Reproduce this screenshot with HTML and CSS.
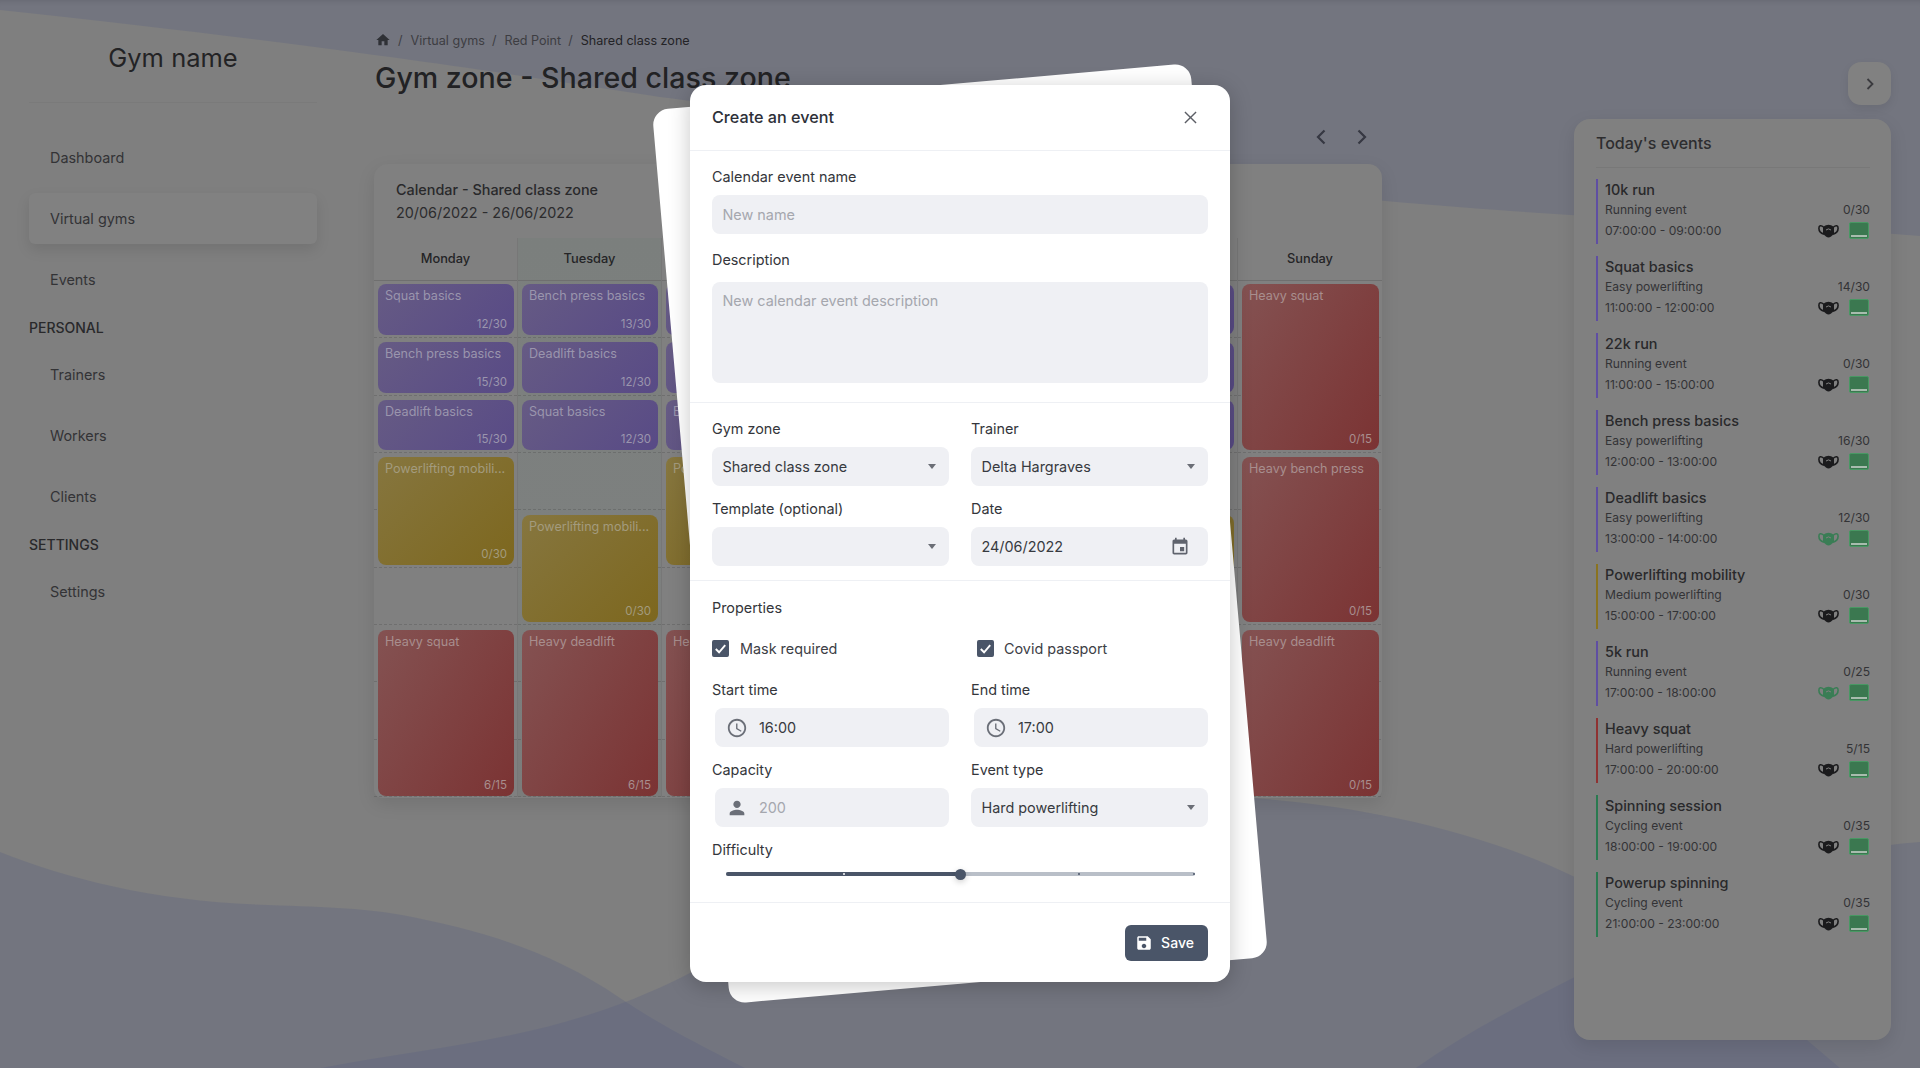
FILE: index.html
```html
<!DOCTYPE html>
<html lang="en">
<head>
<meta charset="utf-8">
<title>Gym zone - Shared class zone</title>
<link rel="stylesheet" href="styles.css">
</head>
<body>
<svg class="defs" aria-hidden="true">
  <symbol id="mask" viewBox="0 0 21 14">
    <path d="M5 3C7 1.5 9 .8 10.5 .8S14 1.5 16 3V9.5C14 12 12 13.6 10.5 13.6S7 12 5 9.500Z" fill="currentColor"/>
    <path d="M5.500 3C3 .8 .9 1.500 .9 4.200C.9 7 3 9.200 6 10.200M15.500 3C18 .8 20.100 1.500 20.100 4.200C20.100 7 18 9.200 15 10.200" fill="none" stroke="currentColor" stroke-width="1.600"/>
    <path d="M8 6Q10.500 3.800 13 6" fill="none" stroke="#808080" stroke-width="1"/>
  </symbol>
</svg>
<svg class="bg" viewBox="0 0 1920 1068" preserveAspectRatio="none" aria-hidden="true">
  <path class="wave" d="M0 0H1920V236C1800 226 1680 222 1570 215C1400 204 1250 192 1000 150C850 125 750 108 660 97C500 72 300 42 0 10Z"/>
  <path class="wave" d="M0 852C70 880 160 902 268 905C330 907 370 909 402 915C480 930 550 950 620 998C660 1025 700 1045 745 1068H0Z"/>
  <path class="wave" d="M321 1068C450 1043 560 1040 690 973C800 900 1000 780 1253 798C1360 806 1480 830 1577 878C1680 930 1760 1000 1840 1068Z"/>
  <path class="wave" d="M1416 1068C1470 1030 1530 1000 1575 977C1680 910 1800 850 1920 842V1068Z"/>
</svg>

<div class="app">
  <aside class="sidebar">
    <div class="brand">Gym name</div>
    <nav class="nav">
      <a class="nav-item">Dashboard</a>
      <a class="nav-item is-active">Virtual gyms</a>
      <a class="nav-item">Events</a>
      <div class="nav-heading">PERSONAL</div>
      <a class="nav-item">Trainers</a>
      <a class="nav-item">Workers</a>
      <a class="nav-item">Clients</a>
      <div class="nav-heading">SETTINGS</div>
      <a class="nav-item">Settings</a>
    </nav>
  </aside>

  <main class="main">
    <div class="crumbs">
      <svg class="crumb-home" viewBox="0 0 24 24"><path d="M10 20v-6h4v6h5v-8h3L12 3 2 12h3v8z"/></svg>
      <span class="crumb-sep">/</span><span>Virtual gyms</span>
      <span class="crumb-sep">/</span><span>Red Point</span>
      <span class="crumb-sep">/</span><span class="crumb-current">Shared class zone</span>
    </div>
    <h1 class="title">Gym zone - Shared class zone</h1>
    <div class="week-nav">
      <svg class="chev" viewBox="0 0 10 16"><path d="M8.500 1.500 2 8l6.500 6.500"/></svg>
      <svg class="chev" viewBox="0 0 10 16"><path d="M1.500 1.500 8 8l-6.500 6.500"/></svg>
    </div>
    <section class="calendar">
      <header class="cal-head">
        <div class="cal-name">Calendar - Shared class zone</div>
        <div class="cal-range">20/06/2022 - 26/06/2022</div>
      </header>
      <div class="days">
        <div class="day">
          <div class="day-name">Monday</div>
          <div class="slots">
            <div class="ev ev-purple r1"><span class="ev-t">Squat basics</span><span class="ev-c">12/30</span></div>
            <div class="ev ev-purple r2"><span class="ev-t">Bench press basics</span><span class="ev-c">15/30</span></div>
            <div class="ev ev-purple r3"><span class="ev-t">Deadlift basics</span><span class="ev-c">15/30</span></div>
            <div class="ev ev-yellow r4-5"><span class="ev-t">Powerlifting mobili...</span><span class="ev-c">0/30</span></div>
            <div class="ev ev-red r7-9"><span class="ev-t">Heavy squat</span><span class="ev-c">6/15</span></div>
          </div>
        </div>
        <div class="day day-tint">
          <div class="day-name">Tuesday</div>
          <div class="slots">
            <div class="ev ev-purple r1"><span class="ev-t">Bench press basics</span><span class="ev-c">13/30</span></div>
            <div class="ev ev-purple r2"><span class="ev-t">Deadlift basics</span><span class="ev-c">12/30</span></div>
            <div class="ev ev-purple r3"><span class="ev-t">Squat basics</span><span class="ev-c">12/30</span></div>
            <div class="ev ev-yellow r5-6"><span class="ev-t">Powerlifting mobili...</span><span class="ev-c">0/30</span></div>
            <div class="ev ev-red r7-9"><span class="ev-t">Heavy deadlift</span><span class="ev-c">6/15</span></div>
          </div>
        </div>
        <div class="day">
          <div class="day-name">Wednesday</div>
          <div class="slots">
            <div class="ev ev-purple r1"><span class="ev-t">Squat basics</span><span class="ev-c">12/30</span></div>
            <div class="ev ev-purple r2"><span class="ev-t">Deadlift basics</span><span class="ev-c">12/30</span></div>
            <div class="ev ev-purple r3"><span class="ev-t">Bench press basics</span><span class="ev-c">15/30</span></div>
            <div class="ev ev-yellow r4-5"><span class="ev-t">Powerlifting mobili...</span><span class="ev-c">0/30</span></div>
            <div class="ev ev-red r7-9"><span class="ev-t">Heavy squat</span><span class="ev-c">6/15</span></div>
          </div>
        </div>
        <div class="day">
          <div class="day-name">Thursday</div>
          <div class="slots"></div>
        </div>
        <div class="day">
          <div class="day-name">Friday</div>
          <div class="slots"></div>
        </div>
        <div class="day">
          <div class="day-name">Saturday</div>
          <div class="slots">
            <div class="ev ev-purple r1"><span class="ev-t">Squat basics</span><span class="ev-c">12/30</span></div>
            <div class="ev ev-purple r2"><span class="ev-t">Deadlift basics</span><span class="ev-c">12/30</span></div>
            <div class="ev ev-purple r3"><span class="ev-t">Bench press basics</span><span class="ev-c">15/30</span></div>
            <div class="ev ev-yellow r5-6"><span class="ev-t">Powerlifting mobili...</span><span class="ev-c">0/30</span></div>
            <div class="ev ev-red r7-9"><span class="ev-t">Heavy squat</span><span class="ev-c">6/15</span></div>
          </div>
        </div>
        <div class="day">
          <div class="day-name">Sunday</div>
          <div class="slots">
            <div class="ev ev-red r1-3"><span class="ev-t">Heavy squat</span><span class="ev-c">0/15</span></div>
            <div class="ev ev-red r4-6"><span class="ev-t">Heavy bench press</span><span class="ev-c">0/15</span></div>
            <div class="ev ev-red r7-9"><span class="ev-t">Heavy deadlift</span><span class="ev-c">0/15</span></div>
          </div>
        </div>
      </div>
    </section>
  </main>

  <aside class="rail">
    <button class="collapse" type="button">
      <svg class="chev-sm" viewBox="0 0 8 12"><path d="M1.500 1 6.500 6l-5 5"/></svg>
    </button>
    <section class="today">
      <h2 class="today-title">Today's events</h2>
      <div class="today-list">
        <article class="te te-purple"><div class="te-name">10k run</div><div class="te-row"><span>Running event</span><span>0/30</span></div><div class="te-row te-last"><span>07:00:00 - 09:00:00</span><span class="te-icons"><svg class="mask-i"><use href="#mask"/></svg><i class="pass"></i></span></div></article>
        <article class="te te-purple"><div class="te-name">Squat basics</div><div class="te-row"><span>Easy powerlifting</span><span>14/30</span></div><div class="te-row te-last"><span>11:00:00 - 12:00:00</span><span class="te-icons"><svg class="mask-i"><use href="#mask"/></svg><i class="pass"></i></span></div></article>
        <article class="te te-purple"><div class="te-name">22k run</div><div class="te-row"><span>Running event</span><span>0/30</span></div><div class="te-row te-last"><span>11:00:00 - 15:00:00</span><span class="te-icons"><svg class="mask-i"><use href="#mask"/></svg><i class="pass"></i></span></div></article>
        <article class="te te-purple"><div class="te-name">Bench press basics</div><div class="te-row"><span>Easy powerlifting</span><span>16/30</span></div><div class="te-row te-last"><span>12:00:00 - 13:00:00</span><span class="te-icons"><svg class="mask-i"><use href="#mask"/></svg><i class="pass"></i></span></div></article>
        <article class="te te-purple"><div class="te-name">Deadlift basics</div><div class="te-row"><span>Easy powerlifting</span><span>12/30</span></div><div class="te-row te-last"><span>13:00:00 - 14:00:00</span><span class="te-icons"><svg class="mask-i mask-ok"><use href="#mask"/></svg><i class="pass"></i></span></div></article>
        <article class="te te-yellow"><div class="te-name">Powerlifting mobility</div><div class="te-row"><span>Medium powerlifting</span><span>0/30</span></div><div class="te-row te-last"><span>15:00:00 - 17:00:00</span><span class="te-icons"><svg class="mask-i"><use href="#mask"/></svg><i class="pass"></i></span></div></article>
        <article class="te te-purple"><div class="te-name">5k run</div><div class="te-row"><span>Running event</span><span>0/25</span></div><div class="te-row te-last"><span>17:00:00 - 18:00:00</span><span class="te-icons"><svg class="mask-i mask-ok"><use href="#mask"/></svg><i class="pass"></i></span></div></article>
        <article class="te te-red"><div class="te-name">Heavy squat</div><div class="te-row"><span>Hard powerlifting</span><span>5/15</span></div><div class="te-row te-last"><span>17:00:00 - 20:00:00</span><span class="te-icons"><svg class="mask-i"><use href="#mask"/></svg><i class="pass"></i></span></div></article>
        <article class="te te-green"><div class="te-name">Spinning session</div><div class="te-row"><span>Cycling event</span><span>0/35</span></div><div class="te-row te-last"><span>18:00:00 - 19:00:00</span><span class="te-icons"><svg class="mask-i"><use href="#mask"/></svg><i class="pass"></i></span></div></article>
        <article class="te te-green"><div class="te-name">Powerup spinning</div><div class="te-row"><span>Cycling event</span><span>0/35</span></div><div class="te-row te-last"><span>21:00:00 - 23:00:00</span><span class="te-icons"><svg class="mask-i"><use href="#mask"/></svg><i class="pass"></i></span></div></article>
      </div>
    </section>
  </aside>
</div>

<div class="modal-wrap">
  <div class="modal-back"></div>
  <form class="modal">
    <header class="modal-head">
      <span>Create an event</span>
      <svg class="close" viewBox="0 0 14 14"><path d="M1 1l12 12M13 1 1 13"/></svg>
    </header>
    <section class="sec sec-a">
      <label class="lbl">Calendar event name</label>
      <div class="field ph">New name</div>
      <label class="lbl lbl-desc">Description</label>
      <div class="field area ph">New calendar event description</div>
    </section>
    <section class="sec sec-b">
      <div class="two">
        <div><label class="lbl">Gym zone</label><div class="field sel">Shared class zone</div></div>
        <div><label class="lbl">Trainer</label><div class="field sel">Delta Hargraves</div></div>
        <div><label class="lbl">Template (optional)</label><div class="field sel"></div></div>
        <div><label class="lbl">Date</label><div class="field date"><span>24/06/2022</span><svg class="ic-date" viewBox="0 0 24 24"><path d="M17 12h-5v5h5v-5zM16 1v2H8V1H6v2H5c-1.110 0-1.990.9-1.990 2L3 19c0 1.100.89 2 2 2h14c1.100 0 2-.9 2-2V5c0-1.100-.9-2-2-2h-1V1h-2zm3 18H5V8h14v11z"/></svg></div></div>
      </div>
    </section>
    <section class="sec sec-c">
      <div class="lbl">Properties</div>
      <div class="checks">
        <label class="chk"><svg class="box" viewBox="0 0 18 18"><rect width="18" height="18" rx="2"/><path d="M4 9.500 7.500 13 14 5.500"/></svg>Mask required</label>
        <label class="chk chk-second"><svg class="box" viewBox="0 0 18 18"><rect width="18" height="18" rx="2"/><path d="M4 9.500 7.500 13 14 5.500"/></svg>Covid passport</label>
      </div>
      <div class="two two-c">
        <div><label class="lbl">Start time</label><div class="field adorn"><svg class="ic" viewBox="0 0 24 24"><path d="M11.990 2C6.470 2 2 6.480 2 12s4.470 10 9.990 10C17.520 22 22 17.520 22 12S17.520 2 11.990 2zM12 20c-4.420 0-8-3.580-8-8s3.580-8 8-8 8 3.580 8 8-3.580 8-8 8zm.5-13H11v6l5.250 3.150.75-1.230-4.500-2.670z"/></svg>16:00</div></div>
        <div><label class="lbl">End time</label><div class="field adorn"><svg class="ic" viewBox="0 0 24 24"><path d="M11.990 2C6.470 2 2 6.480 2 12s4.470 10 9.990 10C17.520 22 22 17.520 22 12S17.520 2 11.990 2zM12 20c-4.420 0-8-3.580-8-8s3.580-8 8-8 8 3.580 8 8-3.580 8-8 8zm.5-13H11v6l5.250 3.150.75-1.230-4.500-2.670z"/></svg>17:00</div></div>
        <div><label class="lbl">Capacity</label><div class="field adorn ph"><svg class="ic" viewBox="0 0 24 24"><path d="M12 12c2.210 0 4-1.790 4-4s-1.790-4-4-4-4 1.790-4 4 1.790 4 4 4zm0 2c-2.670 0-8 1.340-8 4v2h16v-2c0-2.660-5.330-4-8-4z"/></svg>200</div></div>
        <div><label class="lbl">Event type</label><div class="field sel">Hard powerlifting</div></div>
      </div>
      <label class="lbl lbl-diff">Difficulty</label>
      <div class="slider">
        <div class="slider-fill"></div>
        <i class="tick tick-1"></i><i class="tick tick-2"></i><i class="tick tick-3"></i>
        <div class="thumb"></div>
      </div>
    </section>
    <footer class="modal-foot">
      <button class="save" type="button"><svg viewBox="0 0 24 24"><path d="M17 3H5c-1.110 0-2 .9-2 2v14c0 1.100.89 2 2 2h14c1.100 0 2-.9 2-2V7l-4-4zm-5 16c-1.660 0-3-1.340-3-3s1.340-3 3-3 3 1.340 3 3-1.340 3-3 3zm3-10H5V5h10v4z"/></svg>Save</button>
    </footer>
  </form>
</div>
</body>
</html>
```
FILE: styles.css
```css
* { box-sizing: border-box; }
html, body { margin: 0; height: 1068px; overflow: hidden; }
body {
  position: relative;
  background: #7f7f7f;
  font-family: Inter, "Liberation Sans", sans-serif;
  font-size: 14.400px;
  color: #2a2a2c;
}
.defs { position: absolute; width: 0; height: 0; }
.bg { position: absolute; left: 0; top: 0; width: 1920px; height: 1068px; }
.wave { fill: rgba(90, 95, 130, .3); }

.app { position: relative; z-index: 0; display: flex; height: 1068px; box-shadow: inset 0 6px 6px -6px rgba(0, 0, 0, .15); }

/* Sidebar */
.sidebar { width: 374px; padding-left: 29px; flex: none; }
.brand {
  width: 288px; height: 103px; padding-top: 41px;
  border-bottom: 1px solid #7a7a7a;
  font-size: 25.500px; line-height: 34px; font-weight: 400; text-align: center; color: #232325;
}
.nav { width: 288px; margin-top: 29px; display: flex; flex-direction: column; }
.nav-item { display: flex; align-items: center; height: 51px; margin-bottom: 10px; padding-left: 21px; color: #333336; }
.nav-item.is-active { background: #818181; border-radius: 6px; box-shadow: 0 6px 14px rgba(0, 0, 0, .1); }
.nav-heading { height: 20px; margin: 3px 0 11px; line-height: 20px; font-size: 14px; font-weight: 500; color: #29292b; }

/* Main */
.main { width: 1008px; flex: none; padding-top: 32px; }
.crumbs { display: flex; align-items: center; height: 16px; font-size: 12.600px; color: #3d3d42; }
.crumb-home { width: 16px; height: 16px; fill: #2f3136; margin: 0 7px 0 1px; }
.crumb-sep { margin: 0 8px 0 0; }
.crumbs span + .crumb-sep { margin-left: 7px; }
.crumb-current { color: #232326; }
.title { margin: 12px 0 0 1px; font-size: 28.600px; line-height: 36px; font-weight: 500; color: #222224; }
.week-nav { display: flex; justify-content: flex-end; gap: 31px; height: 26px; margin: 28px 0 14px; padding-right: 15px; align-items: center; }
.chev { width: 10px; height: 16px; fill: none; stroke: #363842; stroke-width: 2.200; }

.calendar { height: 634px; background: #808080; border-radius: 14px 14px 8px 8px; box-shadow: 0 6px 18px rgba(0, 0, 0, .1); }
.cal-head { height: 74px; padding: 14px 22px 0; line-height: 23px; }
.cal-name { font-weight: 500; color: #29292b; }
.cal-range { color: #2c2c2e; }
.days { display: grid; grid-template-columns: repeat(7, 144px); }
.day { border-right: 1px solid #777; }
.day:last-child { border-right: 0; }
.day-tint { background: linear-gradient(180deg, #7b7f7d, #7d807f 55%, #7b7c7b); }
.day-name { height: 43px; line-height: 42px; text-align: center; font-size: 12.800px; font-weight: 500; color: #242426; border-bottom: 1px solid #6f6f6f; }
.slots {
  display: grid;
  grid-template-rows: repeat(9, 57.330px);
  height: 516px;
  position: relative;
}
.slots::before {
  content: ""; position: absolute; inset: 0;
  background: repeating-linear-gradient(180deg, transparent 0 56.330px, rgba(0, 0, 0, .13) 56.330px 57.330px);
  -webkit-mask-image: repeating-linear-gradient(90deg, #000 0 3px, transparent 3px 5px);
  mask-image: repeating-linear-gradient(90deg, #000 0 3px, transparent 3px 5px);
}
.ev {
  position: relative; z-index: 1;
  grid-column: 1;
  margin: 4px 3px 3px 4px; padding: 3px 7px 2px;
  border-radius: 8px;
  display: flex; flex-direction: column; justify-content: space-between;
  font-size: 12.600px; line-height: 18px;
  min-width: 0;
  color: #96919f;
}
.ev-t { white-space: nowrap; overflow: hidden; font-weight: 400; }
.ev-c { text-align: right; font-size: 11.500px; }
.ev-purple { background: linear-gradient(135deg, #665b84, #584a86); color: #9a95ad; }
.ev-yellow { background: linear-gradient(135deg, #86763f, #7d671e); color: #a39b7e; }
.ev-red { background: linear-gradient(120deg, #845252, #7b3333); color: #a88e8e; }
.r1 { grid-row: 1; margin-top: 3px; } .r2 { grid-row: 2; } .r3 { grid-row: 3; }
.r4-5 { grid-row: 4 / span 2; } .r5-6 { grid-row: 5 / span 2; margin-top: 5px; }
.r7-9 { grid-row: 7 / span 3; margin-top: 5px; margin-bottom: 1px; } .r1-3 { grid-row: 1 / span 3; margin-top: 3px; } .r4-6 { grid-row: 4 / span 3; }

/* Right rail */
.rail { width: 317px; margin-left: 192px; flex: none; padding-top: 62px; display: flex; flex-direction: column; align-items: flex-end; }
.collapse {
  width: 43px; height: 43px; margin-bottom: 14px; padding: 0;
  border: 0; border-radius: 13px; background: #818181;
  box-shadow: 0 4px 10px rgba(0, 0, 0, .08);
  display: flex; align-items: center; justify-content: center;
}
.chev-sm { width: 8px; height: 12px; fill: none; stroke: #3a3a3e; stroke-width: 1.800; }
.today { width: 317px; height: 921px; padding: 12px 21px 0 22px; background: #808080; border-radius: 16px; box-shadow: 0 6px 18px rgba(0, 0, 0, .1); }
.today-title { margin: 0; padding-bottom: 12px; border-bottom: 1px solid #787878; font-size: 16px; line-height: 24px; font-weight: 500; color: #2d2d2f; }
.today-list { display: flex; flex-direction: column; gap: 12px; margin-top: 11px; }
.te { height: 65px; border-left: 2px solid; padding-left: 7px; display: grid; grid-template-rows: 22px 16px 27px; color: #333336; font-size: 12.100px; }
.te-purple { border-color: #5f4ea3; } .te-yellow { border-color: #8a7320; } .te-red { border-color: #8f3232; } .te-green { border-color: #2a7a50; }
.te-name { font-size: 14.400px; line-height: 21px; font-weight: 500; color: #29292b; }
.te-row { display: flex; justify-content: space-between; align-items: center; }
.te-icons { display: flex; align-items: center; gap: 10px; margin-right: 1px; }
.mask-i { width: 21px; height: 14px; color: #1b1b1d; }
.mask-i.mask-ok { color: #3a7d55; }
.pass { display: block; position: relative; width: 20px; height: 17px; background: #3b7850; border: 1px solid #489863; border-radius: 2px; }
.pass::after { content: ""; position: absolute; left: 1px; right: 1px; bottom: 1px; height: 2px; background: #a8bcae; }

/* Modal */
.modal-wrap { position: absolute; z-index: 1; left: 690px; top: 85px; width: 540px; height: 897px; }
.modal-back { position: absolute; inset: 0; background: #fff; border-radius: 16px; transform: rotate(-5deg); }
.modal {
  position: relative; height: 897px;
  background: #fff; border-radius: 16px;
  box-shadow: 0 4px 22px rgba(0, 0, 0, .22);
  color: #333438;
  display: flex; flex-direction: column;
}
.modal-head {
  height: 66px; flex: none; padding: 0 22px 2px;
  border-bottom: 1px solid #eef0f4;
  display: flex; align-items: center; justify-content: space-between;
  font-size: 16.200px; font-weight: 500; color: #2d3038;
}
.close { width: 13px; height: 13px; margin: 2px 11px 0 0; fill: none; stroke: #5c5f66; stroke-width: 1.500; }
.sec { padding: 0 22px; border-bottom: 1px solid #eef0f4; flex: none; }
.sec-a { height: 252px; padding-top: 16px; }
.sec-b { height: 178px; padding-top: 16px; }
.sec-c { height: 322px; padding-top: 17px; }
.lbl { display: block; height: 20px; line-height: 20px; font-size: 14.400px; font-weight: 400; color: #34363b; margin-bottom: 8px; }
.lbl-desc { margin: 16px 0 12px; }
.field {
  height: 39px; padding: 0 10.500px;
  background: #eff0f4; border-radius: 8px;
  display: flex; align-items: center;
  font-size: 14.400px; color: #373a40;
}
.ph { color: #a5a7ae; }
.area { height: 101px; align-items: flex-start; padding-top: 10px; line-height: 18px; }
.two { display: grid; grid-template-columns: 237px 237px; column-gap: 22px; row-gap: 13px; }
.sel { position: relative; }
.sel::after {
  content: ""; position: absolute; right: 13px; top: 17px;
  border-left: 4.500px solid transparent; border-right: 4.500px solid transparent; border-top: 5px solid #6b6e76;
}
.date { justify-content: space-between; }
.ic-date { width: 20px; height: 20px; margin-right: 8px; fill: #5f636d; }
.checks { display: flex; height: 20px; margin: 20px 0 22px; }
.chk { width: 259px; display: flex; align-items: center; gap: 11px; color: #3d4046; }
.chk-second { margin-left: 6px; width: auto; gap: 10px; }
.box { width: 17px; height: 17px; fill: #4a5568; stroke: none; }
.box path { fill: none; stroke: #fff; stroke-width: 2; }
.adorn { margin-left: 3px; padding-left: 11px; gap: 11px; }
.ic { width: 22px; height: 22px; fill: #6b6f78; flex: none; }
.lbl-diff { margin-top: 13px; margin-bottom: 12px; }
.slider { position: relative; height: 4px; margin: 0 13px 0 14px; background: #b9bfc8; border-radius: 2px; }
.slider-fill { position: absolute; left: 0; top: 0; bottom: 0; width: 50%; background: #4a5568; border-radius: 2px; }
.thumb { position: absolute; left: 50%; top: -3.500px; width: 11px; height: 11px; margin-left: -5.500px; background: #4a5568; border-radius: 50%; box-shadow: 0 2px 6px rgba(0, 0, 0, .2); }
.tick { position: absolute; top: 1px; width: 2px; height: 2px; border-radius: 50%; }
.tick-1 { left: 25%; background: #fff; }
.tick-2 { left: 75%; background: #4a5568; }
.tick-3 { right: 0; background: #4a5568; }
.modal-foot { flex: 1; display: flex; justify-content: flex-end; padding: 22px; }
.save {
  width: 83px; height: 36px; padding: 0 4px 1px 0;
  border: 0; border-radius: 6px; background: #4a5568;
  color: #fff; font: 500 14px Inter, "Liberation Sans", sans-serif;
  display: flex; align-items: center; justify-content: center; gap: 8px;
}
.save svg { width: 18px; height: 18px; fill: #fff; }
```
